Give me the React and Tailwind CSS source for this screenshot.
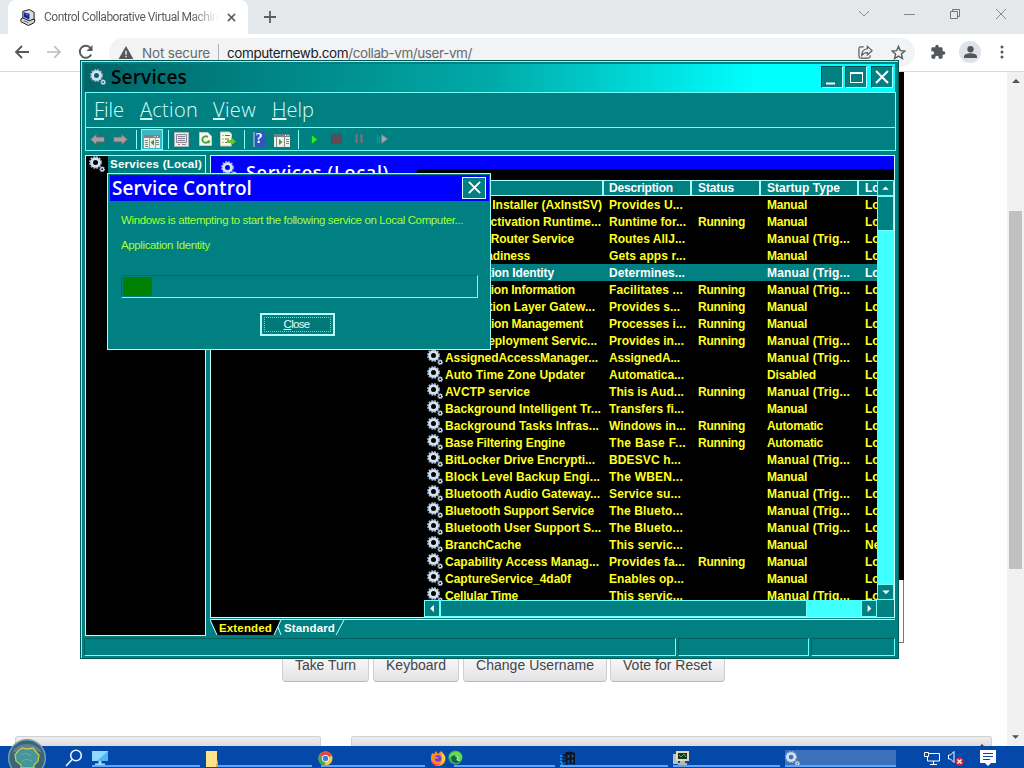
import { useLayoutEffect, useRef } from "react";

// Text run whose letter spacing is computed so that it fills the width w.
function Fit({ w, className = "", children }) {
  const ref = useRef(null);
  useLayoutEffect(() => {
    const el = ref.current;
    el.style.letterSpacing = "0px";
    const natural = el.getBoundingClientRect().width;
    const n = el.textContent.length;
    el.style.letterSpacing = `${(w - natural) / n}px`;
  }, [w, children]);
  return (
    <span ref={ref} className={`inline-block whitespace-pre ${className}`}>
      {children}
    </span>
  );
}

function Gear({ className = "" }) {
  return (
    <svg viewBox="0 0 16 16" className={`block shrink-0 ${className}`}>
      <circle cx="6.500" cy="6.500" r="5.600" fill="none" stroke="#93abc0" strokeWidth="1.800" strokeDasharray="1.900 1.030" />
      <circle cx="6.500" cy="6.500" r="3.900" fill="none" stroke="#d3e2f1" strokeWidth="2.800" />
      <circle cx="13.200" cy="13.200" r="2.200" fill="none" stroke="#93abc0" strokeWidth="1.400" strokeDasharray="1.100 .620" />
      <circle cx="13.200" cy="13.200" r="1.500" fill="none" stroke="#d3e2f1" strokeWidth="1.200" />
    </svg>
  );
}

const rows = [
  ["ActiveX Installer (AxInstSV)", 157, "Provides U...", 74, "", "Manual"],
  ["Agent Activation Runtime...", 156, "Runtime for...", 77, "Running", "Manual"],
  ["AllJoyn Router Service", 129, "Routes AllJ...", 76, "", "Manual (Trig..."],
  ["App Readiness", 85, "Gets apps r...", 77, "", "Manual"],
  ["Application Identity", 109, "Determines...", 76, "", "Manual (Trig..."],
  ["Application Information", 130, "Facilitates ...", 74, "Running", "Manual (Trig..."],
  ["Application Layer Gatew...", 150, "Provides s...", 71, "Running", "Manual"],
  ["Application Management", 138, "Processes i...", 77, "Running", "Manual"],
  ["AppX Deployment Servic...", 152, "Provides in...", 75, "Running", "Manual (Trig..."],
  ["AssignedAccessManager...", 153, "AssignedA...", 71, "", "Manual (Trig..."],
  ["Auto Time Zone Updater", 140, "Automatica...", 75, "", "Disabled"],
  ["AVCTP service", 85, "This is Aud...", 75, "Running", "Manual (Trig..."],
  ["Background Intelligent Tr...", 156, "Transfers fi...", 75, "", "Manual"],
  ["Background Tasks Infras...", 154, "Windows in...", 77, "Running", "Automatic"],
  ["Base Filtering Engine", 120, "The Base F...", 77, "Running", "Automatic"],
  ["BitLocker Drive Encrypti...", 150, "BDESVC h...", 72, "", "Manual (Trig..."],
  ["Block Level Backup Engi...", 155, "The WBEN...", 74, "", "Manual"],
  ["Bluetooth Audio Gateway...", 155, "Service su...", 72, "", "Manual (Trig..."],
  ["Bluetooth Support Service", 149, "The Blueto...", 74, "", "Manual (Trig..."],
  ["Bluetooth User Support S...", 156, "The Blueto...", 74, "", "Manual (Trig..."],
  ["BranchCache", 76, "This servic...", 74, "", "Manual"],
  ["Capability Access Manag...", 154, "Provides fa...", 76, "Running", "Manual"],
  ["CaptureService_4da0f", 126, "Enables op...", 75, "", "Manual"],
  ["Cellular Time", 73, "This servic...", 74, "", "Manual (Trig..."],
];
const startupWidth = { Manual: 40, "Manual (Trig...": 83, Disabled: 49, Automatic: 56 };

function ListRow({ row, index }) {
  const selected = index === 4;
  return (
    <div
      className={`flex h-[17px] w-[453px] shrink-0 items-start text-[12px] leading-[19px] ${
        selected ? "bg-[#008080] text-white" : "text-[#ffff20]"
      }`}
    >
      <Gear className="ml-[3px] h-[16px] w-[16px]" />
      <div className="ml-[2px] w-[164px] shrink-0"><Fit w={row[1]}>{row[0]}</Fit></div>
      <div className="w-[89px] shrink-0"><Fit w={row[3]}>{row[2]}</Fit></div>
      <div className="w-[69px] shrink-0">{row[4] && <Fit w={47}>{row[4]}</Fit>}</div>
      <div className="w-[98px] shrink-0"><Fit w={startupWidth[row[5]]}>{row[5]}</Fit></div>
      <div className="w-[12px] shrink-0 overflow-hidden whitespace-pre">{index === 20 ? "Ne" : "Lo"}</div>
    </div>
  );
}

function ScrollButton({ dir, className = "" }) {
  const d = { up: "M4 9.500h7L7.500 6z", down: "M4 6h8L8 10z", left: "M9.500 3.500v8L5.500 7.500z", right: "M6 3.500v8l4-4z" }[dir];
  return (
    <div className={`shrink-0 border border-[#70ffff] bg-[#008080] ${className}`}>
      <svg viewBox="0 0 15 15" className="block h-full w-full"><path d={d} fill="#fff" /></svg>
    </div>
  );
}

function TitleButton({ children, className = "" }) {
  return (
    <div className={`flex h-[22px] w-[22px] items-center justify-center border border-[#004f4f] border-r-[#b0ffff] border-b-[#b0ffff] bg-[#008080] ${className}`}>
      <svg viewBox="0 0 20 20" className="h-[20px] w-[20px]" fill="none" stroke="#fff">{children}</svg>
    </div>
  );
}

function Toolbar() {
  const sep = "h-[19px] w-px shrink-0 bg-[#8affff]";
  return (
    <div className="flex h-[23px] items-center border-b border-[#70ffff]">
      <svg viewBox="0 0 15 12" className="ml-[4px] h-[13px] w-[15px]"><path d="M.5 6l6-5.500v3h8v5h-8v3z" fill="#a39da4" stroke="#62686c" /></svg>
      <svg viewBox="0 0 15 12" className="ml-[8px] h-[13px] w-[15px]"><path d="M14.500 6l-6-5.500v3h-8v5h8v3z" fill="#a39da4" stroke="#62686c" /></svg>
      <div className={`ml-[8px] ${sep}`} />
      <div className="ml-[4px] flex h-[21px] w-[22px] items-center justify-center border border-[#70ffff] bg-[#3fb5bd]">
        <svg viewBox="0 0 16 16" className="mt-[3px] h-[16px] w-[16px] shrink-0">
          <path d="M0 2h16v13H0z" fill="#f2f0e6" /><path d="M0 2h16v3H0z" fill="#75868f" /><path d="M10.500 3.500h1M13 3.500h1" stroke="#fff" /><path d="M1 7.500h3M1 9.500h3M1 11.500h3M1 13.500h3M12 7.500h3M12 9.500h3M12 11.500h3" stroke="#728a91" /><path d="M5.500 5v10M11.500 5v10" stroke="#a4a8a2" /><path d="M10 6.500v6L6.500 9.500z" fill="#3d9b28" />
        </svg>
      </div>
      <div className={`ml-[5px] ${sep}`} />
      <svg viewBox="0 0 15 15" className="ml-[5px] h-[15px] w-[15px]"><path d="M.5.500h14v14H.5z" fill="#f3f0ec" stroke="#a9b4b6" /><path d="M2.500 2.500h10v8h-10z" fill="#e8e4ec" stroke="#8d8996" /><path d="M4 4.500h7M4 6.500h7M4 8.500h7M4 12.500h2M8 12.500h4" stroke="#8a8497" /></svg>
      <svg viewBox="0 0 14 15" className="ml-[10px] h-[16px] w-[13px]"><path d="M.5.500h9l4 4v10H.5z" fill="#f8f8ec" stroke="#c4d0bd" /><path d="M10.500 9a3.500 3.500 0 1 1-1-3.500" fill="none" stroke="#45a238" strokeWidth="2" /><path d="M11.500 8v4H8z" fill="#45a238" /></svg>
      <svg viewBox="0 0 16 15" className="ml-[8px] h-[16px] w-[16px]"><path d="M.5.500h9l2 2v12H.5z" fill="#fafae5" stroke="#c5cfbe" /><path d="M2.500 4h1M5 4h5M2.500 7.500h1M5 7.500h4M2.500 11h1M5 11h4" stroke="#606a5d" /><path d="M7 8.500h4V6l5 4-5 4v-2.500H7z" fill="#66c62d" /></svg>
      <div className={`ml-[8px] ${sep}`} />
      <div className="ml-[8px] flex h-[15px] w-[12px] items-center justify-center bg-[#3057b8] font-['Liberation_Serif',serif] text-[14px] leading-none font-bold text-white shadow-[inset_2px_0_0_#7898de]">?</div>
      <svg viewBox="0 0 16 13" className="mt-[3px] ml-[9px] h-[13px] w-[16px]"><path d="M0 0h16v13H0z" fill="#f1eee8" /><path d="M0 0h16v3H0z" fill="#73848a" /><path d="M11 1.500h1M13.500 1.500h1" stroke="#fff" /><path d="M10.500 3v10M2.500 3v10M12 5.500h3M12 7.500h3M12 9.500h3" stroke="#82908d" /><path d="M5 5v6l3.500-3z" fill="#449b32" /></svg>
      <div className={`ml-[8px] ${sep}`} />
      <svg viewBox="0 0 7 11" className="ml-[12px] h-[11px] w-[7px]"><path d="M.5.500v10l6-5z" fill="#28ee28" stroke="#079d16" /></svg>
      <div className="ml-[13px] h-[10px] w-[11px] border border-[#36595e] bg-[#604b58]" />
      <svg viewBox="0 0 9 10" className="ml-[13px] h-[10px] w-[9px]"><path d="M1.500 0v9M6.500 0v9" stroke="#4c7480" strokeWidth="3" /><path d="M1.500 1v7M6.500 1v7" stroke="#8a6e80" /></svg>
      <svg viewBox="0 0 13 10" className="ml-[12px] h-[11px] w-[13px]"><path d="M1.500 0v9M3.500 2v7" stroke="#826d80" /><path d="M5.500 0v9l6-4.500z" fill="#aaa5b2" stroke="#65848b" /></svg>
    </div>
  );
}

function ServicesWindow() {
  return (
    <div className="absolute top-[60px] left-[80px] flex h-[599px] w-[819px] flex-col border border-[#005a5a] bg-[#008080] font-['Liberation_Sans',sans-serif]">
      <div className="flex flex-1 flex-col border-t border-l border-[#70ffff] pt-[2px] pl-[2px]">
        <div className="flex h-[28px] w-[811px] items-center bg-linear-to-r from-[#006668] from-0% via-[#00aaa8] via-50% to-[#00ffff] to-83%">
          <Gear className="mb-[2px] ml-[6px] h-[16px] w-[16px]" />
          <div className="mb-[2px] ml-[5px] flex-1 font-['Open_Sans',sans-serif] text-[19px] leading-none font-semibold text-black"><Fit w={76}>Services</Fit></div>
          <TitleButton className="mb-[2px]"><path d="M4 16.500h9" strokeWidth="2" /></TitleButton>
          <TitleButton className="mb-[2px] ml-[2px]"><path d="M4.500 5.500h12v10h-12z" /><path d="M4 6h13" strokeWidth="2" /></TitleButton>
          <TitleButton className="mr-[2px] mb-[2px] ml-[4px]"><path d="M4 4l12 12M16 4L4 16" strokeWidth="2" /></TitleButton>
        </div>
        <div className="ml-[1px] w-[811px] border-t border-r border-l border-[#70ffff]">
          <div className="flex h-[35px] items-center border-b border-[#70ffff] pl-[8px] font-['Open_Sans',sans-serif] text-[20px] font-light text-[#d8ffff]">
            <span className="mr-[16px]"><Fit w={30}><u className="underline-offset-1">F</u>ile</Fit></span>
            <span className="mr-[15px]"><Fit w={58}><u className="underline-offset-1">A</u>ction</Fit></span>
            <span className="mr-[16px]"><Fit w={43}><u className="underline-offset-1">V</u>iew</Fit></span>
            <Fit w={42}><u className="underline-offset-1">H</u>elp</Fit>
          </div>
          <Toolbar />
        </div>
        <div className="mt-[4px] ml-px flex h-[481px]">
          <div className="flex w-[121px] shrink-0 border border-[#b8ffff] bg-black text-[12px] font-bold text-white">
            <Gear className="ml-[3px] h-[16px] w-[16px]" />
            <div className="ml-[3px] h-[17px] flex-1 bg-[#008080] pl-[2px] leading-[17px]"><Fit w={92} className="text-[11.500px]">Services (Local)</Fit></div>
          </div>
          <div className="ml-[4px] flex w-[685px] flex-col">
            <div className="flex h-[463px] flex-col border border-[#c8ffff] bg-black">
              <div className="flex h-[24px] shrink-0 bg-[#0000ff]">
                <Gear className="mt-[5px] ml-[10px] h-[16px] w-[16px]" />
                <div className="ml-[9px] font-['Open_Sans',sans-serif] text-[18px] leading-[32px] font-semibold text-white"><Fit w={143}>Services (Local)</Fit></div>
                <div className="mt-[13px] ml-[27px] h-[11px] flex-1 rounded-tl-[5px] bg-black" />
              </div>
              <div className="ml-[213px] flex h-[420px] shrink-0 font-bold">
                <div className="flex w-[453px] flex-col overflow-hidden">
                  <div className="flex h-[16px] shrink-0 border-t border-b border-[#a8ffff] bg-[#008080] text-[12px] leading-[15px] text-white">
                    <div className="w-[180px] shrink-0 border-r-2 border-[#a8ffff] pl-[21px]">Name</div>
                    <div className="w-[88px] shrink-0 border-r-2 border-[#a8ffff] pl-[5px]"><Fit w={64}>Description</Fit></div>
                    <div className="w-[69px] shrink-0 border-r-2 border-[#a8ffff] pl-[6px]"><Fit w={36}>Status</Fit></div>
                    <div className="w-[98px] shrink-0 border-r-2 border-[#a8ffff] pl-[6px]"><Fit w={73}>Startup Type</Fit></div>
                    <div className="w-[18px] shrink-0 overflow-hidden pl-[6px] whitespace-pre">Lo</div>
                  </div>
                  <div className="flex h-[404px] flex-col overflow-hidden">
                    {rows.map((row, i) => <ListRow key={row[0]} row={row} index={i} />)}
                  </div>
                </div>
                <div className="flex w-[17px] flex-col bg-[#40ffff]">
                  <ScrollButton dir="up" className="h-[16px]" />
                  <div className="h-[35px] border border-[#70ffff] bg-[#008080]" />
                  <div className="flex-1" />
                  <ScrollButton dir="down" className="h-[16px]" />
                </div>
              </div>
              <div className="ml-[213px] flex h-[17px] bg-[#008080]">
                <ScrollButton dir="left" className="w-[16px]" />
                <div className="w-[367px] border border-[#70ffff] bg-[#008080]" />
                <div className="w-[54px] bg-[#40ffff]" />
                <ScrollButton dir="right" className="w-[16px]" />
              </div>
            </div>
            <div className="mt-px grid h-[17px] border-t border-[#c8ffff]">
              <svg viewBox="0 0 140 16" className="col-start-1 row-start-1 h-[16px] w-[140px]">
                <path d="M1 0l6 15h57l6-15z" fill="#000" />
                <path d="M0 0l7 15M64 15l7-15M68 7l3 8M126 15l8-15" fill="none" stroke="#c8ffff" />
              </svg>
              <div className="col-start-1 row-start-1 flex pl-[9px] text-[11.500px] leading-[17px] font-bold">
                <div className="w-[65px] text-[#ffff20]"><Fit w={53}>Extended</Fit></div>
                <div className="text-white"><Fit w={51}>Standard</Fit></div>
              </div>
            </div>
          </div>
        </div>
        <div className="mt-[2px] flex h-[18px] w-[811px] gap-[2px]">
          <div className="w-[592px] border border-[#006060] border-r-[#70ffff] border-b-[#70ffff]" />
          <div className="w-[131px] border border-[#006060] border-r-[#70ffff] border-b-[#70ffff]" />
          <div className="flex-1 border border-[#006060] border-r-[#70ffff] border-b-[#70ffff]" />
        </div>
      </div>
    </div>
  );
}

function ServiceControl() {
  return (
    <div className="absolute top-[173px] left-[107px] flex h-[177px] w-[384px] flex-col border border-[#a0ffff] bg-[#008080] p-px font-['Liberation_Sans',sans-serif]">
      <div className="ml-px flex h-[26px] w-[379px] shrink-0 items-center bg-[#0000ff] pl-[2px]">
        <div className="flex-1 font-['Open_Sans',sans-serif] text-[19px] leading-none font-semibold text-white"><Fit w={140}>Service Control</Fit></div>
        <div className="mr-[3px] mb-[1px] flex h-[22px] w-[24px] items-center justify-center border border-[#e0ffff] bg-[#008080]">
          <svg viewBox="0 0 16 16" className="h-[15px] w-[15px]"><path d="M2 2l12 12M14 2L2 14" stroke="#fff" strokeWidth="2" /></svg>
        </div>
      </div>
      <div className="flex flex-col pl-[12px] text-[11.500px] leading-[15px] text-[#a8ff30]">
        <div className="mt-[12px]"><Fit w={342}>Windows is attempting to start the following service on Local Computer...</Fit></div>
        <div className="mt-[10px]"><Fit w={89}>Application Identity</Fit></div>
        <div className="mt-[22px] h-[23px] w-[357px] border border-[#006b6b] border-r-[#70ffff] border-b-[#70ffff] p-px">
          <div className="h-[19px] w-[29px] bg-[#008000]" />
        </div>
        <div className="mt-[15px] ml-[139px] h-[23px] w-[75px] border-2 border-[#b8ffff] p-[2px]">
          <div className="flex h-full items-center justify-center border border-dotted border-[#c0b0b0] bg-[#007878] pr-[2px] text-[11.500px] leading-none text-[#e0ffff]"><Fit w={26}><u>C</u>lose</Fit></div>
        </div>
      </div>
    </div>
  );
}

function BrowserChrome() {
  return (
    <div className="shrink-0 font-['Inter',sans-serif]">
      <div className="flex h-[34px] bg-[#e5e8eb]">
        <div className="w-[8px] shrink-0 rounded-tr-[8px] rounded-br-[8px] bg-[#e5e8eb] shadow-[0_0_0_0_#fff]" />
        <div className="flex w-[240px] shrink-0 items-center rounded-t-[8px] bg-white pl-[12px]">
          <svg viewBox="0 0 17 17" className="h-[17px] w-[16px]">
            <path d="M1 10l5-3 10 4-1 3-6 3-8-4z" fill="#d6d6dc" stroke="#111" /><path d="M3 2l7-2 5 3v7l-5 2-7-3z" fill="#d9d9e0" stroke="#111" /><path d="M4 3l6 1.500v6L4 8z" fill="#15239c" /><path d="M5 4l3 1v2z" fill="#788ee6" /><path d="M4 12l5 2" stroke="#666" />
          </svg>
          <div className="ml-[8px] w-[175px] bg-linear-to-r from-[#55585b] from-84% to-transparent bg-clip-text font-['Roboto',sans-serif] text-[12px] text-transparent"><Fit w={174}>Control Collaborative Virtual Machin</Fit></div>
          <svg viewBox="0 0 10 10" className="ml-[8px] h-[9px] w-[9px]"><path d="M1 1l8 8M9 1L1 9" stroke="#5a5d60" strokeWidth="1.700" /></svg>
        </div>
        <svg viewBox="0 0 12 12" className="mt-[11px] ml-[16px] h-[12px] w-[12px]"><path d="M6 0v12M0 6h12" stroke="#5c5f62" strokeWidth="1.800" /></svg>
        <div className="flex-1" />
        <svg viewBox="0 0 12 8" className="mt-[10px] h-[8px] w-[12px]" fill="none" stroke="#85888a"><path d="M1 1l5 5 5-5" /></svg>
        <svg viewBox="0 0 11 11" className="mt-[9px] ml-[34px] h-[11px] w-[11px]" stroke="#85888a"><path d="M0 5.500h11" /></svg>
        <svg viewBox="0 0 12 12" className="mt-[8px] ml-[34px] h-[12px] w-[12px]" fill="none" stroke="#75787a"><path d="M1.500 3.500h7v7h-7zM3.500 3V1.500h7v7H9" /></svg>
        <svg viewBox="0 0 12 12" className="mt-[8px] mr-[17px] ml-[34px] h-[12px] w-[12px]" stroke="#85888a"><path d="M1 1l10 10M11 1L1 11" /></svg>
      </div>
      <div className="flex h-[38px] items-center border-b border-[#d8dadd] bg-white pb-[1px]">
        <svg viewBox="0 0 16 16" className="ml-[14px] h-[16px] w-[16px]" fill="none" stroke="#55595c" strokeWidth="1.800"><path d="M15 8H2M8 2L2 8l6 6" /></svg>
        <svg viewBox="0 0 16 16" className="ml-[16px] h-[16px] w-[16px]" fill="none" stroke="#bbbdc0" strokeWidth="1.700"><path d="M1 8h13M8 2l6 6-6 6" /></svg>
        <svg viewBox="0 0 16 16" className="ml-[16px] h-[16px] w-[16px]" fill="none" stroke="#55595c" strokeWidth="1.900"><path d="M13.200 10.500A6 6 0 1 1 12.500 4" /><path d="M14.500 1v6h-6z" fill="#55595c" stroke="none" /></svg>
        <div className="ml-[15px] flex h-[29px] w-[806px] items-center rounded-full bg-[#f1f3f4] text-[13.500px] text-[#67696c]">
          <svg viewBox="0 0 16 14" className="ml-[9px] h-[13px] w-[16px]"><path d="M8 0l8 14H0z" fill="#55585b" /><path d="M8 5v4.500M8 10.500v1.500" stroke="#f1f3f4" strokeWidth="1.500" /></svg>
          <span className="mt-[3px] ml-[8px]"><Fit w={68}>Not secure</Fit></span>
          <div className="mx-[8px] h-[17px] w-px bg-[#b0b2b5]" />
          <Fit w={245} className="mt-[3px]"><span className="text-[#202124]">computernewb.com</span>/collab-vm/user-vm/</Fit>
          <div className="flex-1" />
          <svg viewBox="0 0 16 16" className="h-[15px] w-[15px]" fill="none" stroke="#595c5f" strokeWidth="1.300"><path d="M6 2H3a2 2 0 0 0-2 2v8a2 2 0 0 0 2 2h8a2 2 0 0 0 2-2v-1" /><path d="M10 1.500L15 6l-5 4.500V8c-3 0-4.500 1-6 3 0-4 2-6.500 6-7z" /></svg>
          <svg viewBox="0 0 16 16" className="mr-[9px] ml-[18px] h-[15px] w-[15px]" fill="none" stroke="#595c5f" strokeWidth="1.500"><path d="M8 1.500l1.900 4.500 4.900.4-3.700 3.200 1.100 4.800L8 11.800l-4.200 2.600 1.100-4.800L1.200 6.400 6.100 6z" /></svg>
        </div>
        <svg viewBox="0 0 24 24" className="ml-[15px] h-[16px] w-[16px]" fill="#55585b"><path d="M20.500 11H19V7a2 2 0 0 0-2-2h-4V3.500a2.500 2.500 0 0 0-5 0V5H4a2 2 0 0 0-2 2v3.800h1.500a2.700 2.700 0 0 1 0 5.400H2V20a2 2 0 0 0 2 2h3.800v-1.500a2.700 2.700 0 0 1 5.400 0V22H17a2 2 0 0 0 2-2v-4h1.500a2.500 2.500 0 0 0 0-5z" /></svg>
        <div className="ml-[13px] flex h-[22px] w-[22px] items-center justify-center rounded-full bg-[#dfe3e9]">
          <svg viewBox="0 0 14 14" className="h-[13px] w-[13px]" fill="#51555e"><circle cx="7" cy="3.500" r="3.400" /><path d="M0 13v-2c0-2 4-3.300 7-3.300s7 1.300 7 3.300v2z" /></svg>
        </div>
        <svg viewBox="0 0 4 14" className="ml-[19px] h-[14px] w-[4px]" fill="#55585b"><circle cx="2" cy="2" r="1.500" /><circle cx="2" cy="7" r="1.500" /><circle cx="2" cy="12" r="1.500" /></svg>
      </div>
    </div>
  );
}

function PageButton({ w, tw, className, children }) {
  return (
    <div className={`flex h-[33px] items-center justify-center rounded-[4px] border border-[#cfcfd1] border-b-[#b9b9bb] bg-linear-to-b from-white to-[#e3e3e6] text-[14px] text-[#444] ${className}`}>
      <Fit w={tw}>{children}</Fit>
    </div>
  );
}

function Page() {
  return (
    <div className="flex h-[674px] shrink-0 bg-white font-['Liberation_Sans',sans-serif]">
      <div className="flex w-[1007px] flex-col">
        <div className="ml-[81px] h-[571px] w-[823px] shrink-0 border-r border-b border-[#777]">
          <div className="h-[508px] w-[823px] bg-black" />
        </div>
        <div className="mt-[6px] ml-[282px] flex">
          <PageButton tw={61} className="w-[87px]">Take Turn</PageButton>
          <PageButton tw={60} className="ml-[4px] w-[86px]">Keyboard</PageButton>
          <PageButton tw={118} className="ml-[4px] w-[144px]">Change Username</PageButton>
          <PageButton tw={89} className="ml-[3px] w-[115px]">Vote for Reset</PageButton>
        </div>
        <div className="mt-[54px] ml-[15px] flex h-[10px]">
          <div className="w-[306px] rounded-t-[3px] border border-b-0 border-[#d0d2d2] bg-linear-to-b from-[#eee] to-[#dcdcdc]" />
          <div className="ml-[30px] flex w-[641px] items-end justify-end rounded-t-[3px] border border-b-0 border-[#d0d2d2] bg-linear-to-b from-[#eee] to-[#dcdcdc] pr-[7px]">
            <svg viewBox="0 0 5 3" className="h-[2px] w-[4px]"><path d="M0 3l2.500-3L5 3z" fill="#333" /></svg>
          </div>
        </div>
      </div>
      <div className="flex w-[17px] flex-col items-center bg-[#f1f1f1]">
        <svg viewBox="0 0 8 5" className="mt-[7px] h-[5px] w-[8px]"><path d="M0 4h8L4 0z" fill="#505050" /></svg>
        <div className="mt-[127px] h-[358px] w-[13px] bg-[#c1c1c1]" />
        <svg viewBox="0 0 8 4" className="mt-[166px] h-[4px] w-[7px]"><path d="M0 0h8L4 4z" fill="#505050" /></svg>
      </div>
    </div>
  );
}

function Task({ w, active, line = "", children }) {
  return (
    <div className={`mt-[4px] flex h-[17px] shrink-0 flex-col ${active ? "bg-[#3c70bb]" : ""} ${w}`}>
      <div className="flex h-[15px] items-center">{children}</div>
      <div className={`h-[2px] bg-[#5ca4ff] ${line}`} />
    </div>
  );
}

function Taskbar() {
  return (
    <div className="flex h-[22px] bg-[#0448a9]">
      <svg viewBox="0 0 18 18" className="mt-[3px] ml-[65px] h-[18px] w-[18px]" fill="none" stroke="#e8f4ff" strokeWidth="1.600"><circle cx="11" cy="6.500" r="5.300" /><path d="M7 10.500L1 17" /></svg>
      <Task w="ml-[9px] w-[108px]">
        <svg viewBox="0 0 16 15" className="h-[15px] w-[16px]"><path d="M0 1h16v10H0z" fill="#52b6f5" /><path d="M0 1h16L5 11H0z" fill="#8dd9ff" /><path d="M6.500 11h3v3h-3zM3 13.500h10v1.500H3z" fill="#a9dcf8" /></svg>
      </Task>
      <Task w="ml-[5px] w-[107px]" line="ml-[13px]">
        <svg viewBox="0 0 14 16" className="mt-[2px] h-[16px] w-[14px]"><path d="M1 0h11v10l1 1v5H1z" fill="#ffe28a" /><path d="M12 9l1 2v5h-2z" fill="#d9a93a" /></svg>
      </Task>
      <Task w="ml-[6px] w-[107px]" line="ml-[3px]">
        <svg viewBox="0 0 16 16" className="mt-[1px] h-[15px] w-[15px]"><circle cx="8" cy="8" r="7.500" fill="#f2ca3d" /><path d="M8 8L1.500 4.200A7.500 7.500 0 0 1 14.800 5z" fill="#dd4d3f" /><path d="M8 8L1.500 4.200A7.500 7.500 0 0 0 7 15.500z" fill="#49a158" /><circle cx="8" cy="8" r="3.800" fill="#fff" /><circle cx="8" cy="8" r="2.900" fill="#3a7bdb" /></svg>
      </Task>
      <Task w="ml-[5px] w-[125px]" line="ml-[24px]">
        <svg viewBox="0 0 16 16" className="h-[16px] w-[16px] shrink-0"><path d="M2 3l2 1 2-3 2 3 3-3c1 2 5 4 4.500 8A7.300 7.300 0 0 1 1 10C.5 7 1.500 5 2 3z" fill="#ff8b25" /><path d="M11 1c1 2 5 4 4 9-1 2-2 4-5 5 3-4 2-8 1-14z" fill="#ffcf38" /><path d="M1 9c1 4 5 6 9 5-5 3-9 0-9-5z" fill="#ff3d59" /><circle cx="8" cy="8.500" r="3.300" fill="#783bd1" /><path d="M4 7h5L6 9z" fill="#ff8b25" /></svg>
        <svg viewBox="0 0 16 16" className="ml-[2px] h-[15px] w-[15px] shrink-0"><circle cx="8" cy="8" r="7.500" fill="#36b94d" /><path d="M1 7C3 0 15 0 15 8c0 3-5 4-6 2 2-3-2-5-5-4L1 9z" fill="#67dc4e" /><path d="M4 7c3-3 7 0 5 3 1 2 4 2 5 1-5 6-12 2-10-4z" fill="#146247" /><path d="M8 7c2-.5 3 1 2 3-1 1 2 2 3 1" fill="none" stroke="#d9f6dc" /></svg>
      </Task>
      <Task w="ml-[5px] w-[108px]">
        <svg viewBox="0 0 16 14" className="mt-[1px] h-[14px] w-[16px]"><path d="M5 2c3-2 6-1 10 0v12c-4-2-6-1-9 0z" fill="#10121c" /><path d="M7.500 4.500l2-1v3l-2 1zM11.500 3.500h2v3h-2zM7.500 9.500l2-1v3l-2 1zM11.500 8.500h2v3h-2z" fill="#1256a0" /><path d="M0 5h2M0 8h2M0 11h2M1 13h2" stroke="#12a4e8" strokeWidth="1.500" /><path d="M3 4h2M3 7h2M3 10h2" stroke="#10121c" strokeWidth="1.500" /></svg>
      </Task>
      <Task w="ml-[5px] w-[107px]">
        <svg viewBox="0 0 16 15" className="h-[15px] w-[16px]"><path d="M0 4h5v10H0z" fill="#bfc2b8" /><path d="M3 1h13v10H3z" fill="#d9d8c5" /><path d="M5 3h9v6H5z" fill="#16341e" /><path d="M6 5l2 2 3-3 2 3" stroke="#56ae5a" fill="none" /><path d="M7 11h5v2H7zM5 13h9v2H5z" fill="#b8b8aa" /></svg>
      </Task>
      <Task w="ml-[5px] w-[111px]" active><Gear className="mt-[1px] h-[15px] w-[15px]" /></Task>
      <svg viewBox="0 0 16 14" className="mt-[5px] ml-[28px] h-[14px] w-[16px]" fill="none" stroke="#fff"><path d="M5 2.500h10.500v7.500H3.500V6M.5 1.500h4v4h-4zM9.500 10v3M6 13.500h7" /></svg>
      <svg viewBox="0 0 16 16" className="mt-[4px] ml-[8px] h-[16px] w-[16px]"><path d="M.5 5h2L6 1.500v11L2.500 9h-2z" fill="none" stroke="#fff" /><circle cx="11.500" cy="11.500" r="4.200" fill="#d9233b" /><path d="M9.500 9.500l4 4M13.500 9.500l-4 4" stroke="#fff" strokeWidth="1.300" /></svg>
      <svg viewBox="0 0 16 16" className="mt-[4px] ml-[16px] h-[16px] w-[16px]"><path d="M0 0h16v13h-5l-3 3-3-3H0z" fill="#fff" /><path d="M3 3.500h10M3 6.500h10M3 9.500h7" stroke="#0448a9" /></svg>
    </div>
  );
}

export default function App() {
  return (
    <div className="relative flex h-[768px] w-[1024px] flex-col overflow-hidden bg-white">
      <BrowserChrome />
      <Page />
      <Taskbar />
      <ServicesWindow />
      <ServiceControl />
      <svg viewBox="0 0 38 38" className="absolute top-[739px] left-[8px] h-[38px] w-[38px]">
        <circle cx="19" cy="19" r="18.300" fill="#3b6575" stroke="#7a9fb2" strokeWidth="1.400" />
        <path d="M4 14C9 2 29 2 34 14c-8-4-22-4-30 0z" fill="#5f838e" />
        <path d="M10 12l4-3 5 1 6-1 3 4 3 3-1 6-4 4v3H13v-3l-5-4-1-6z" fill="#439798" stroke="#c5c657" strokeWidth="1.300" />
        <path d="M13 16l5-2 5 3M14 22l4-2 6 2" stroke="#70aaa4" fill="none" />
      </svg>
    </div>
  );
}
